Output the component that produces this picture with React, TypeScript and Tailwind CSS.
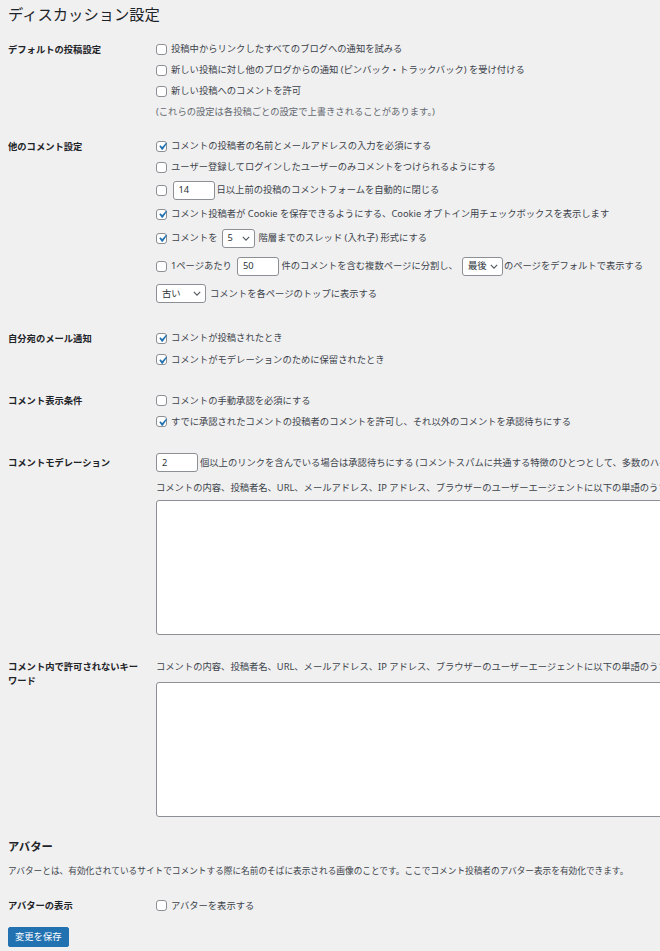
import type { ReactNode } from "react";

const Checkbox = ({ checked = false }: { checked?: boolean }) => (
  <span className="relative w-[11px] h-[11px] shrink-0 rounded-[3px] border border-[#8c8f94] bg-white">
    {checked && (
      <svg viewBox="0 0 20 20" className="absolute -left-[2.5px] -top-[2.5px] w-[15px] h-[15px] fill-[#2271b1]">
        <path d="M14.83 4.89l1.34.94-5.81 8.38H9.02L5.78 9.67l1.34-1.25 2.57 2.4z" />
      </svg>
    )}
  </span>
);

const TextInput = ({ value }: { value: string }) => (
  <span className="flex items-center w-[42px] h-[19px] shrink-0 rounded-[3px] border border-[#8c8f94] bg-white px-[5px] text-[#2c3338]">
    {value}
  </span>
);

const Select = ({ value, width }: { value: string; width: string }) => (
  <span
    className={`flex items-center justify-between h-[19px] shrink-0 rounded-[3px] border border-[#8c8f94] bg-white pl-[5px] pr-[4px] text-[#2c3338] ${width}`}
  >
    <span>{value}</span>
    <svg viewBox="0 0 10 6" className="w-[8px] h-[5px] fill-none stroke-[#50575e] stroke-[1.4]">
      <path d="M1 1l4 4 4-4" />
    </svg>
  </span>
);

// one line in a settings cell
const Row = ({ h, children }: { h: string; children: ReactNode }) => (
  <div className={`flex items-center whitespace-nowrap ${h}`}>{children}</div>
);

const Section = ({ label, className, children }: { label: ReactNode; className: string; children: ReactNode }) => (
  <div className={`flex ${className}`}>
    <div className="w-[148px] shrink-0 font-semibold text-[#1d2327]">{label}</div>
    <div className="flex flex-col">{children}</div>
  </div>
);

export default function App() {
  return (
    <div className="w-[660px] min-h-[951px] overflow-hidden bg-[#f0f0f1] pl-[8px] font-['Noto_Sans','Noto_Sans_CJK_JP',sans-serif] text-[9.3px] text-[#3c434a]">
      <h1 className="pt-[4px] h-[24px] text-[15.3px] leading-[20px] font-normal text-[#1d2327]">
        ディスカッション設定
      </h1>

      {/* デフォルトの投稿設定 */}
      <Section label={<div className="h-[21px] leading-[21px]">デフォルトの投稿設定</div>} className="mt-[14.5px]">
        <Row h="h-[21px] gap-[4px]">
          <Checkbox />
          投稿中からリンクしたすべてのブログへの通知を試みる
        </Row>
        <Row h="h-[21px] gap-[4px]">
          <Checkbox />
          新しい投稿に対し他のブログからの通知 (ピンバック・トラックバック) を受け付ける
        </Row>
        <Row h="h-[21px] gap-[4px]">
          <Checkbox />
          新しい投稿へのコメントを許可
        </Row>
        <Row h="h-[21px] text-[#646970]">(これらの設定は各投稿ごとの設定で上書きされることがあります。)</Row>
      </Section>

      {/* 他のコメント設定 */}
      <Section label={<div className="h-[21px] leading-[21px]">他のコメント設定</div>} className="mt-[13px]">
        <Row h="h-[21px] gap-[4px]">
          <Checkbox checked />
          コメントの投稿者の名前とメールアドレスの入力を必須にする
        </Row>
        <Row h="h-[21px] gap-[4px]">
          <Checkbox />
          ユーザー登録してログインしたユーザーのみコメントをつけられるようにする
        </Row>
        <Row h="h-[25px]">
          <Checkbox />
          <span className="ml-[5.5px] mr-[2px]">
            <TextInput value="14" />
          </span>
          日以上前の投稿のコメントフォームを自動的に閉じる
        </Row>
        <Row h="h-[23px] gap-[4px]">
          <Checkbox checked />
          コメント投稿者が Cookie を保存できるようにする、Cookie オプトイン用チェックボックスを表示します
        </Row>
        <Row h="h-[25px] gap-[4px]">
          <Checkbox checked />
          コメントを
          <Select value="5" width="w-[33px]" />
          階層までのスレッド (入れ子) 形式にする
        </Row>
        <Row h="h-[31px]">
          <Checkbox />
          <span className="ml-[4px] mr-[5px]">1ページあたり</span>
          <TextInput value="50" />
          <span className="ml-[2.5px] mr-[4px]">件のコメントを含む複数ページに分割し、</span>
          <Select value="最後" width="w-[41px]" />
          <span className="ml-[1px]">のページをデフォルトで表示する</span>
        </Row>
        <Row h="h-[24px] gap-[4px]">
          <Select value="古い" width="w-[50px]" />
          コメントを各ページのトップに表示する
        </Row>
      </Section>

      {/* 自分宛のメール通知 */}
      <Section label={<div className="h-[21px] leading-[21px]">自分宛のメール通知</div>} className="mt-[22.3px]">
        <Row h="h-[21px] gap-[4px]">
          <Checkbox checked />
          コメントが投稿されたとき
        </Row>
        <Row h="h-[22px] gap-[4px]">
          <Checkbox checked />
          コメントがモデレーションのために保留されたとき
        </Row>
      </Section>

      {/* コメント表示条件 */}
      <Section label={<div className="h-[21px] leading-[21px]">コメント表示条件</div>} className="mt-[19.4px]">
        <Row h="h-[21px] gap-[4px]">
          <Checkbox />
          コメントの手動承認を必須にする
        </Row>
        <Row h="h-[21px] gap-[4px]">
          <Checkbox checked />
          すでに承認されたコメントの投稿者のコメントを許可し、それ以外のコメントを承認待ちにする
        </Row>
      </Section>

      {/* コメントモデレーション */}
      <Section label={<div className="h-[25px] leading-[25px]">コメントモデレーション</div>} className="mt-[18.3px]">
        <Row h="h-[25px] gap-[2px]">
          <TextInput value="2" />
          個以上のリンクを含んでいる場合は承認待ちにする (コメントスパムに共通する特徴のひとつとして、多数のハイパーリンクがあります。)
        </Row>
        <Row h="h-[20px] mt-[2.5px]">
          コメントの内容、投稿者名、URL、メールアドレス、IP アドレス、ブラウザーのユーザーエージェントに以下の単語のうちいずれかでも含んでいる場合、そのコメントはモデレーション待ちになります。
        </Row>
        <div className="mt-[2px] w-[800px] h-[135px] rounded-[3px] border border-[#8c8f94] bg-white" />
      </Section>

      {/* コメント内で許可されないキーワード */}
      <Section
        label={
          <div className="pt-[3px] leading-[14px]">
            コメント内で許可されないキー
            <br />
            ワード
          </div>
        }
        className="mt-[22px]"
      >
        <Row h="h-[20px]">
          コメントの内容、投稿者名、URL、メールアドレス、IP アドレス、ブラウザーのユーザーエージェントに以下の単語のうちいずれかでも含んでいる場合、そのコメントはゴミ箱に入ります。
        </Row>
        <div className="mt-[5px] w-[800px] h-[135px] rounded-[3px] border border-[#8c8f94] bg-white" />
      </Section>

      {/* アバター */}
      <h2 className="mt-[22px] h-[16px] leading-[16px] text-[11.3px] font-semibold text-[#1d2327]">アバター</h2>
      <p className="mt-[8px] h-[16px] leading-[16px] whitespace-nowrap text-[8.67px]">
        アバターとは、有効化されているサイトでコメントする際に名前のそばに表示される画像のことです。ここでコメント投稿者のアバター表示を有効化できます。
      </p>

      <Section label={<div className="h-[21px] leading-[21px]">アバターの表示</div>} className="mt-[16.5px]">
        <Row h="h-[21px] gap-[4px]">
          <Checkbox />
          アバターを表示する
        </Row>
      </Section>

      <button className="mt-[10.5px] flex h-[20px] items-center rounded-[2px] border border-[#2271b1] bg-[#2271b1] px-[6px] text-[9.3px] text-white">
        変更を保存
      </button>
    </div>
  );
}
